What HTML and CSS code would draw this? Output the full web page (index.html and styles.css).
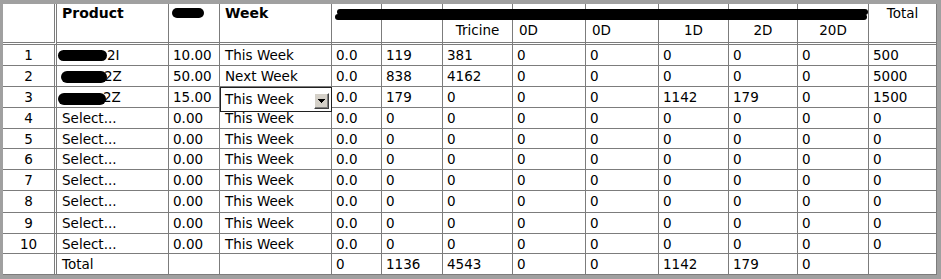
FILE: index.html
```html
<!DOCTYPE html>
<html>
<head>
<meta charset="utf-8">
<link rel="stylesheet" href="styles.css">
</head>
<body>
<div class="frame">
  <div class="grid">
    <span class="redact-bar bar-a"></span>
    <span class="redact-bar bar-b"></span>

    <div class="c h rh"></div>
    <div class="c h hb">Product</div>
    <div class="c h"><span class="blob blob-qty"></span></div>
    <div class="c h hb">Week</div>
    <div class="c h"></div>
    <div class="c h"></div>
    <div class="c h h2">Tricine</div>
    <div class="c h h2 h2l">0D</div>
    <div class="c h h2 h2l">0D</div>
    <div class="c h h2">1D</div>
    <div class="c h h2">2D</div>
    <div class="c h h2">20D</div>
    <div class="c h ht">Total</div>

    <div class="c rh">1</div><div class="c p"><span class="blob blob-r1"></span>2I</div><div class="c">10.00</div><div class="c w">This Week</div><div class="c">0.0</div><div class="c">119</div><div class="c">381</div><div class="c">0</div><div class="c">0</div><div class="c">0</div><div class="c">0</div><div class="c">0</div><div class="c">500</div>

    <div class="c rh">2</div><div class="c p"><span class="blob blob-r2"></span>2Z</div><div class="c">50.00</div><div class="c w">Next Week</div><div class="c">0.0</div><div class="c">838</div><div class="c">4162</div><div class="c">0</div><div class="c">0</div><div class="c">0</div><div class="c">0</div><div class="c">0</div><div class="c">5000</div>

    <div class="c rh">3</div><div class="c p"><span class="blob blob-r3"></span>2Z</div><div class="c">15.00</div><div class="c w edit"><div class="combo">This Week<span class="dd"><svg width="7" height="4" viewBox="0 0 7 4" shape-rendering="crispEdges"><polygon points="0,0 7,0 3.5,4" fill="#000"/></svg></span></div></div><div class="c">0.0</div><div class="c">179</div><div class="c">0</div><div class="c">0</div><div class="c">0</div><div class="c">1142</div><div class="c">179</div><div class="c">0</div><div class="c">1500</div>

    <div class="c rh">4</div><div class="c p">Select...</div><div class="c">0.00</div><div class="c w">This Week</div><div class="c">0.0</div><div class="c">0</div><div class="c">0</div><div class="c">0</div><div class="c">0</div><div class="c">0</div><div class="c">0</div><div class="c">0</div><div class="c">0</div>

    <div class="c rh">5</div><div class="c p">Select...</div><div class="c">0.00</div><div class="c w">This Week</div><div class="c">0.0</div><div class="c">0</div><div class="c">0</div><div class="c">0</div><div class="c">0</div><div class="c">0</div><div class="c">0</div><div class="c">0</div><div class="c">0</div>

    <div class="c rh">6</div><div class="c p">Select...</div><div class="c">0.00</div><div class="c w">This Week</div><div class="c">0.0</div><div class="c">0</div><div class="c">0</div><div class="c">0</div><div class="c">0</div><div class="c">0</div><div class="c">0</div><div class="c">0</div><div class="c">0</div>

    <div class="c rh">7</div><div class="c p">Select...</div><div class="c">0.00</div><div class="c w">This Week</div><div class="c">0.0</div><div class="c">0</div><div class="c">0</div><div class="c">0</div><div class="c">0</div><div class="c">0</div><div class="c">0</div><div class="c">0</div><div class="c">0</div>

    <div class="c rh">8</div><div class="c p">Select...</div><div class="c">0.00</div><div class="c w">This Week</div><div class="c">0.0</div><div class="c">0</div><div class="c">0</div><div class="c">0</div><div class="c">0</div><div class="c">0</div><div class="c">0</div><div class="c">0</div><div class="c">0</div>

    <div class="c rh">9</div><div class="c p">Select...</div><div class="c">0.00</div><div class="c w">This Week</div><div class="c">0.0</div><div class="c">0</div><div class="c">0</div><div class="c">0</div><div class="c">0</div><div class="c">0</div><div class="c">0</div><div class="c">0</div><div class="c">0</div>

    <div class="c rh">10</div><div class="c p">Select...</div><div class="c">0.00</div><div class="c w">This Week</div><div class="c">0.0</div><div class="c">0</div><div class="c">0</div><div class="c">0</div><div class="c">0</div><div class="c">0</div><div class="c">0</div><div class="c">0</div><div class="c">0</div>

    <div class="c rh"></div><div class="c p">Total</div><div class="c"></div><div class="c w"></div><div class="c">0</div><div class="c">1136</div><div class="c">4543</div><div class="c">0</div><div class="c">0</div><div class="c">1142</div><div class="c">179</div><div class="c">0</div><div class="c"></div>
  </div>
</div>
</body>
</html>
```

FILE: styles.css
```css
body {
  margin: 0;
  background: #fff;
  color: #000;
  font-family: "DejaVu Sans", "Verdana", sans-serif;
  font-size: 13.5px;
}

.frame {
  width: 941px;
  height: 279px;
  box-sizing: border-box;
  border-style: solid;
  border-color: #a0a0a0;
  border-width: 4px 4px 4px 3px;
  background: #fff;
}

.grid {
  position: relative;
  display: grid;
  grid-template-columns: 54px 112px 51px 112px 50px 61px 70px 73px 73px 70px 69px 71px 68px;
  grid-template-rows: 41px 21px 21px 21px 21px 20px 21px 21px 22px 21px 20px 21px;
}

.c {
  box-sizing: border-box;
  border-right: 1px solid #7c7c7c;
  border-bottom: 1px solid #7c7c7c;
  padding-left: 4px;
  line-height: 20px;
  white-space: nowrap;
}

.rh {
  border-right: 3px double #7c7c7c;
  text-align: center;
  padding-left: 0;
}

.p, .w { padding-left: 5px; }

.h {
  border-bottom: 3px double #7c7c7c;
  line-height: 17px;
  padding-top: 1px;
}

.hb {
  font-weight: bold;
  font-size: 14px;
  padding-left: 5px;
}

.h2 {
  padding-top: 18px;
  padding-left: 0;
  text-align: center;
}

.h2l {
  text-align: left;
  padding-left: 6px;
}

.ht {
  text-align: center;
  padding-left: 0;
}

.blob {
  display: inline-block;
  background: #000;
  border-radius: 6px;
}

.blob-qty {
  width: 32px;
  height: 10px;
  margin-left: -1px;
  vertical-align: 0;
}

.blob-r1 {
  width: 49px;
  height: 11px;
  margin-left: -4px;
  vertical-align: -1px;
}

.blob-r2 {
  width: 46px;
  height: 12px;
  margin-left: -1px;
  margin-right: -3px;
  vertical-align: -2px;
}

.blob-r3 {
  width: 48px;
  height: 12px;
  margin-left: -4px;
  margin-right: -3px;
  vertical-align: -3px;
}

.redact-bar {
  position: absolute;
  background: #000;
  border-radius: 3px;
  height: 6px;
  z-index: 2;
}

.bar-a {
  left: 334px;
  top: 5px;
  width: 531px;
}

.bar-b {
  left: 332px;
  top: 10px;
  width: 532px;
}

.edit { position: relative; }

.combo {
  position: absolute;
  left: 0;
  top: 0;
  width: 112px;
  height: 25px;
  box-sizing: border-box;
  border: 1px solid #202020;
  background: #fff;
  padding-left: 4px;
  padding-top: 1px;
  line-height: 20px;
  z-index: 1;
}

.dd {
  position: absolute;
  left: 93px;
  top: 5px;
  width: 15px;
  height: 16px;
  box-sizing: border-box;
  background: #d4d0c8;
  border-top: 1px solid #fff;
  border-left: 1px solid #fff;
  border-right: 1px solid #404040;
  border-bottom: 1px solid #404040;
  box-shadow: inset -1px -1px 0 #808080;
  display: flex;
  align-items: center;
  justify-content: center;
}

.dd svg { display: block; }
```
